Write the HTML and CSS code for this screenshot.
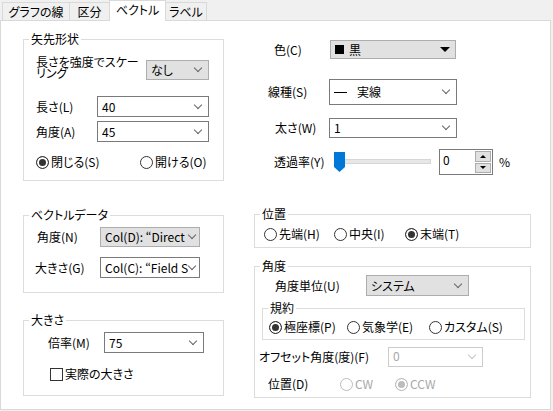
FILE: index.html
```html
<!DOCTYPE html>
<html lang="ja">
<head>
  <meta charset="UTF-8">
  <title>ベクトル</title>
  <link rel="stylesheet" href="styles.css">
</head>
<body>

  <div class="tabs">
    <div class="tab tab-lines">グラフの線</div>
    <div class="tab tab-div">区分</div>
    <div class="tab tab-vector active">ベクトル</div>
    <div class="tab tab-label">ラベル</div>
  </div>

  <div class="panel">
    <!-- left column: arrow head, data, size -->
    <div class="col col-left">
      <fieldset class="group head-group">
        <legend>矢先形状</legend>
        <div class="group-body head-body">
          <div class="row">
            <span class="label scale-label">長さを強度でスケーリング</span>
            <div class="combo gray none-combo">なし<span class="chev"></span></div>
          </div>
          <div class="row row-len">
            <span class="label head-label">長さ(L)</span>
            <div class="combo head-combo">40<span class="chev"></span></div>
          </div>
          <div class="row row-ang">
            <span class="label head-label">角度(A)</span>
            <div class="combo head-combo">45<span class="chev"></span></div>
          </div>
          <div class="row row-close">
            <span class="radio on close-radio"><span class="mark"></span>閉じる(S)</span>
            <span class="radio"><span class="mark"></span>開ける(O)</span>
          </div>
        </div>
      </fieldset>

      <fieldset class="group data-group">
        <legend>ベクトルデータ</legend>
        <div class="group-body data-body">
          <div class="row">
            <span class="label data-label">角度(N)</span>
            <div class="combo gray data-combo">Col(D): “Direct<span class="chev"></span></div>
          </div>
          <div class="row row-mag">
            <span class="label data-label mag-label">大きさ(G)</span>
            <div class="combo data-combo">Col(C): “Field S<span class="chev"></span></div>
          </div>
        </div>
      </fieldset>

      <fieldset class="group size-group">
        <legend>大きさ</legend>
        <div class="group-body size-body">
          <div class="row">
            <span class="label size-label">倍率(M)</span>
            <div class="combo size-combo">75<span class="chev"></span></div>
          </div>
          <div class="row row-actual">
            <span class="check"><span class="box"></span>実際の大きさ</span>
          </div>
        </div>
      </fieldset>
    </div>

    <!-- right column: line props, position, angle -->
    <div class="col col-right">
      <div class="prop-row row-color">
        <span class="prop-label">色(C)</span>
        <div class="combo gray color-combo">
          <span class="swatch"></span>黒
          <span class="tri"></span>
        </div>
      </div>
      <div class="prop-row row-style">
        <span class="prop-label style-label">線種(S)</span>
        <div class="combo style-combo"><span class="dash"></span>実線<span class="chev"></span></div>
      </div>
      <div class="prop-row row-width">
        <span class="prop-label width-label">太さ(W)</span>
        <div class="combo width-combo">1<span class="chev"></span></div>
      </div>
      <div class="prop-row row-alpha">
        <span class="prop-label alpha-label">透過率(Y)</span>
        <svg class="slider" width="98" height="24" viewBox="0 0 98 24">
          <rect x="10.5" y="9.5" width="86" height="4" fill="#e7e7e7" stroke="#d6d6d6"/>
          <path d="M0 2 H11 V17 L5.5 22 L0 17 Z" fill="#0078d7"/>
        </svg>
        <div class="spin">
          <span class="spin-val">0</span>
          <div class="spin-btns">
            <span class="spin-btn"><span class="up"></span></span>
            <span class="spin-btn"><span class="down"></span></span>
          </div>
        </div>
        <span class="pct">%</span>
      </div>

      <fieldset class="group pos-group">
        <legend>位置</legend>
        <div class="group-body pos-body">
          <span class="radio pos-head"><span class="mark"></span>先端(H)</span>
          <span class="radio pos-mid"><span class="mark"></span>中央(I)</span>
          <span class="radio on"><span class="mark"></span>末端(T)</span>
        </div>
      </fieldset>

      <fieldset class="group angle-group">
        <legend>角度</legend>
        <div class="group-body angle-body">
          <div class="row">
            <span class="label unit-label">角度単位(U)</span>
            <div class="combo gray unit-combo">システム<span class="chev"></span></div>
          </div>
          <fieldset class="group conv-group">
            <legend>規約</legend>
            <div class="group-body conv-body">
              <span class="radio on conv-polar"><span class="mark"></span>極座標(P)</span>
              <span class="radio conv-met"><span class="mark"></span>気象学(E)</span>
              <span class="radio"><span class="mark"></span>カスタム(S)</span>
            </div>
          </fieldset>
          <div class="row row-offset">
            <span class="label offset-label">オフセット角度(度)(F)</span>
            <div class="combo disabled offset-combo">0<span class="chev"></span></div>
          </div>
          <div class="row row-dir">
            <span class="label dir-label">位置(D)</span>
            <span class="radio disabled cw"><span class="mark"></span>CW</span>
            <span class="radio disabled on"><span class="mark"></span>CCW</span>
          </div>
        </div>
      </fieldset>
    </div>
  </div>

</body>
</html>
```

FILE: styles.css
```css
body {
  margin: 0;
  width: 553px;
  height: 411px;
  overflow: hidden;
  background-color: #f0f0f0;
  color: #000;
  font-family: "Noto Sans CJK JP", "Noto Sans", sans-serif;
  font-size: 12px;
  line-height: 14px;
  font-feature-settings: "palt";
}

/* tab strip */
.tabs {
  display: flex;
  align-items: flex-end;
  height: 20px;
  padding-left: 2px;
  position: relative;
  z-index: 1;
}

.tab {
  box-sizing: border-box;
  height: 18px;
  margin-right: -1px;
  border: 1px solid #d9d9d9;
  border-bottom: none;
  background-color: #f0f0f0;
  text-align: center;
  line-height: 17px;
}

.tab-lines { width: 68px; }
.tab-div { width: 41px; }
.tab-label { width: 42px; }

.tab.active {
  width: 57px;
  height: 21px;
  margin-bottom: -1px;
  background-color: #fff;
  line-height: 17px;
}

/* page body */
.panel {
  box-sizing: border-box;
  width: 551px;
  height: 390px;
  padding-left: 22px;
  border: 1px solid #d9d9d9;
  background-color: #fff;
  display: flex;
  gap: 30px;
}

.col {
  display: flex;
  flex-direction: column;
}

.col-left { width: 201px; }
.col-right { width: 277px; }

.group {
  margin: 0;
  padding: 0;
  min-width: 0;
  border: 1px solid #dcdcdc;
}

.group legend {
  margin-left: 5px;
  padding: 0 2px;
  line-height: 14px;
}

.row {
  display: flex;
  align-items: center;
}

.label {
  flex-shrink: 0;
  white-space: nowrap;
}

/* drop-down boxes */
.combo {
  box-sizing: border-box;
  display: flex;
  align-items: center;
  height: 21px;
  padding: 0 7px 0 4px;
  border: 1px solid #7a7a7a;
  background-color: #fff;
  white-space: nowrap;
  overflow: hidden;
}

.combo.gray {
  border-color: #adadad;
  background-color: #e1e1e1;
}

.combo.disabled {
  border-color: #cccccc;
  color: #a8a8a8;
}

.chev {
  flex-shrink: 0;
  margin-left: auto;
  width: 5px;
  height: 5px;
  border-right: 1px solid #666;
  border-bottom: 1px solid #666;
  transform: translateY(-2px) rotate(45deg);
}

.disabled .chev {
  border-color: #c4c4c4;
}

/* radios and checkbox */
.radio,
.check {
  display: inline-flex;
  align-items: center;
  white-space: nowrap;
}

.radio .mark {
  box-sizing: border-box;
  width: 13px;
  height: 13px;
  margin-right: 2px;
  border: 1px solid #333;
  border-radius: 50%;
  background-color: #fff;
}

.radio.on .mark {
  background-color: #333;
  box-shadow: inset 0 0 0 2px #fff;
}

.radio.disabled {
  color: #a8a8a8;
}

.radio.disabled .mark {
  border-color: #bcbcbc;
}

.radio.disabled.on .mark {
  background-color: #bcbcbc;
}

.check .box {
  box-sizing: border-box;
  width: 13px;
  height: 13px;
  margin-right: 2px;
  border: 1px solid #333;
}

/* 矢先形状 */
.head-group { margin-top: 11px; }

.head-body { padding: 8px 14px 11px 12px; }

.scale-label {
  width: 110px;
  white-space: normal;
  line-height: 11px;
}

.none-combo {
  width: 63px;
  height: 20px;
  margin-top: 6px;
  align-self: flex-start;
}

.head-label { width: 61px; }
.head-combo { width: 112px; }

.row-len { margin-top: 16px; }
.row-ang { margin-top: 4px; }
.row-close { margin-top: 13px; }
.close-radio { width: 104px; }

/* ベクトルデータ */
.data-group { margin-top: 27px; }

.data-body { padding: 5px 0 14px 13px; }

.data-label { width: 63px; }
.mag-label { margin-left: -2px; width: 65px; }

.data-combo {
  width: 100px;
  height: 20px;
  padding-right: 4px;
}

.row-mag { margin-top: 10px; }
.row-mag .data-combo { height: 21px; }

/* 大きさ */
.size-group { margin-top: 20px; }

.size-body { padding: 5px 0 14px 24px; }

.size-label { width: 56px; }
.size-combo { width: 100px; }

.row-actual {
  margin-top: 14px;
  padding-left: 2px;
}

/* colour, line style, width, transparency */
.prop-row {
  display: flex;
  align-items: center;
}

.prop-label {
  box-sizing: border-box;
  width: 76px;
  padding-left: 20px;
  flex-shrink: 0;
}

.row-color { margin-top: 19px; }

.color-combo {
  width: 126px;
  height: 19px;
  padding-left: 4px;
  padding-right: 5px;
}

.swatch {
  width: 9px;
  height: 9px;
  margin-right: 5px;
  background-color: #000;
}

.tri {
  margin-left: auto;
  width: 0;
  height: 0;
  border-left: 5px solid transparent;
  border-right: 5px solid transparent;
  border-top: 5px solid #000;
}

.row-style { margin-top: 20px; }

.style-label {
  width: 75px;
  padding-left: 14px;
}

.style-combo {
  width: 128px;
  height: 26px;
}

.dash {
  width: 13px;
  height: 1px;
  margin-right: 10px;
  background-color: #000;
}

.row-width { margin-top: 13px; }

.width-label {
  width: 75px;
  padding-left: 21px;
}

.width-combo {
  width: 128px;
  height: 20px;
}

.row-alpha {
  margin-top: 11px;
  height: 26px;
}

.alpha-label { width: 80px; }

.slider { flex-shrink: 0; }

.spin {
  box-sizing: border-box;
  display: flex;
  width: 54px;
  height: 26px;
  margin-left: 7px;
  border: 1px solid #7a7a7a;
}

.spin-val {
  flex: 1;
  padding: 3px 0 0 3px;
}

.spin-btns {
  display: flex;
  flex-direction: column;
  gap: 1px;
  padding: 1px 1px 1px 0;
}

.spin-btn {
  box-sizing: border-box;
  flex: 1;
  width: 16px;
  display: flex;
  align-items: center;
  justify-content: center;
  border: 1px solid #adadad;
  background-color: #e1e1e1;
}

.up,
.down {
  width: 0;
  height: 0;
  border-left: 3px solid transparent;
  border-right: 3px solid transparent;
}

.up { border-bottom: 3px solid #000; }
.down { border-top: 3px solid #000; }

.pct { margin-left: 6px; }

/* 位置 */
.pos-group { margin-top: 32px; }

.pos-body {
  display: flex;
  padding: 6px 0 6px 9px;
}

.pos-head { width: 70px; }
.pos-mid { width: 71px; }

/* 角度 */
.angle-group {
  margin-top: 11px;
  flex: 1;
  margin-bottom: 14px;
}

.angle-body { padding: 2px 0 6px 0; }

.unit-label {
  width: 91px;
  padding-left: 20px;
}

.unit-combo { width: 103px; }

.conv-group {
  width: 263px;
  margin: 5px 0 0 7px;
  box-sizing: border-box;
}

.conv-body {
  display: flex;
  padding: 5px 0 5px 6px;
}

.conv-polar { width: 78px; }
.conv-met { width: 82px; }

.row-offset { margin-top: 7px; }

.offset-label {
  width: 129px;
  padding-left: 4px;
}

.offset-combo {
  width: 95px;
  height: 20px;
  align-items: flex-start;
  padding-top: 1px;
}

.offset-combo .chev { margin-top: 5px; }

.row-dir { margin-top: 10px; }

.dir-label {
  width: 72px;
  padding-left: 13px;
}

.cw { width: 55px; }
```
